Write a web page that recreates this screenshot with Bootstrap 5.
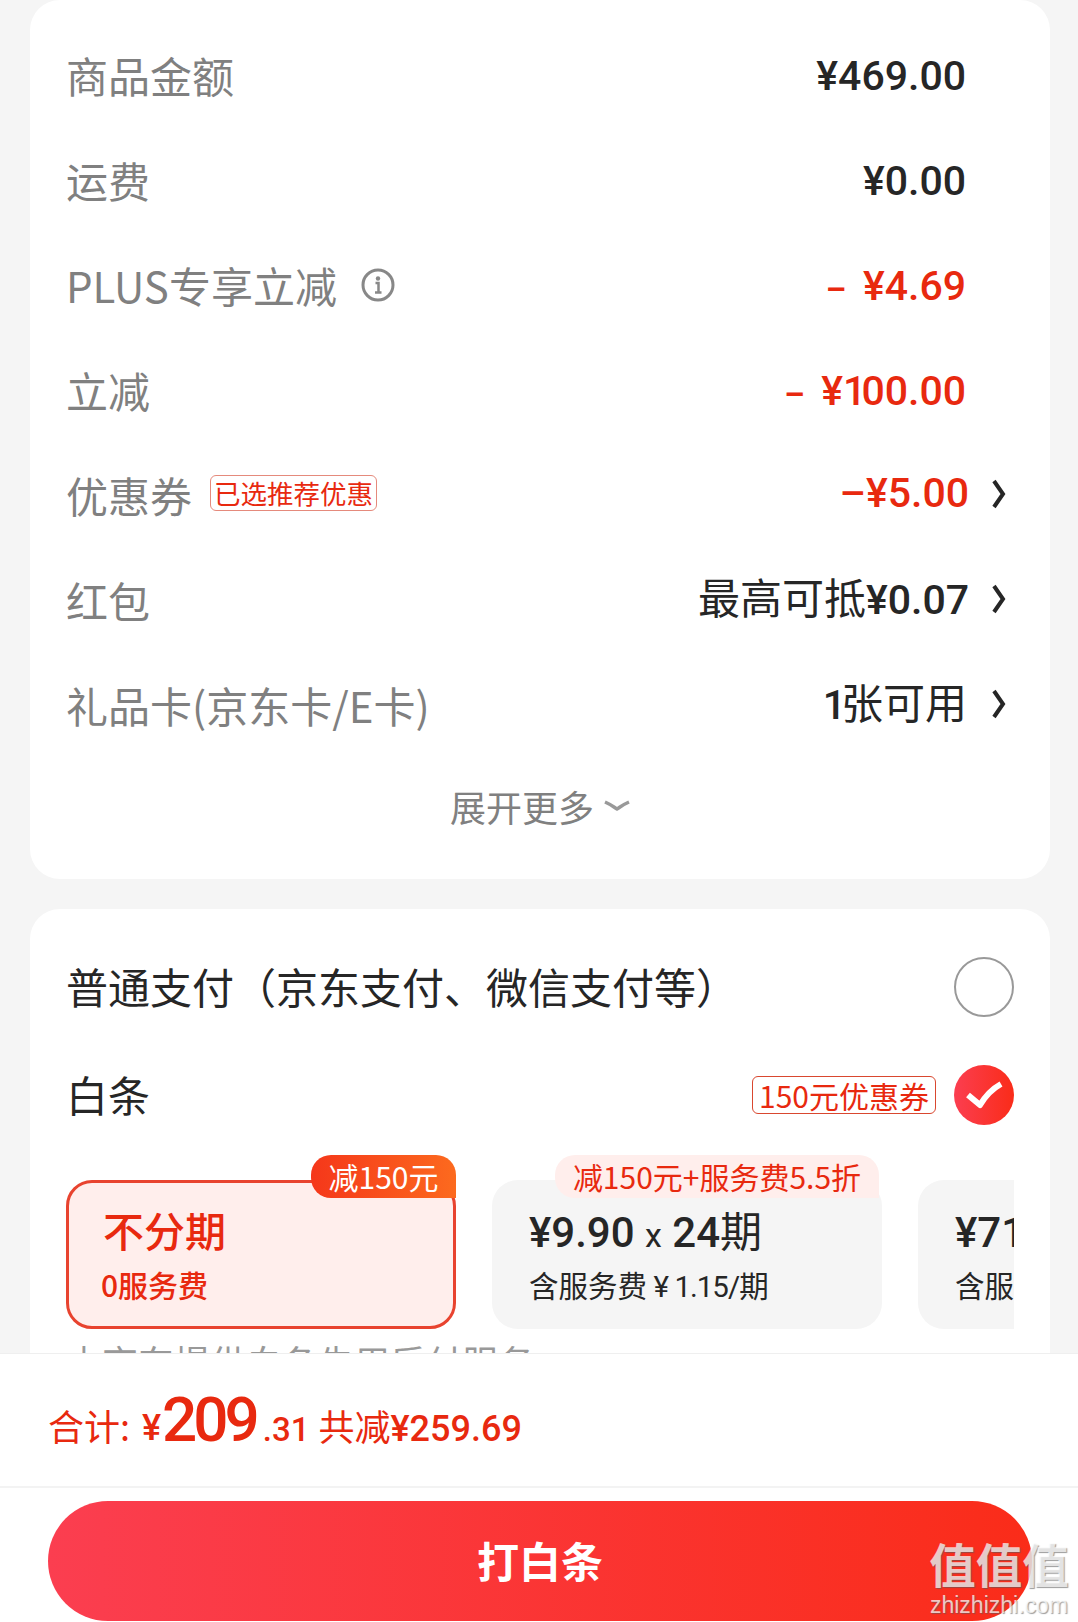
<!DOCTYPE html>
<html lang="zh-CN">
<head>
<meta charset="UTF-8">
<meta name="viewport" content="width=device-width, initial-scale=1.0">
<title>确认订单</title>
<link rel="stylesheet" href="https://cdn.jsdelivr.net/npm/bootstrap@5.3.0/dist/css/bootstrap.min.css">
<style>
html, body { height: 1622px; overflow: hidden; }
body {
    background: #f5f5f5;
    font-family: "Roboto", "Noto Sans CJK SC", sans-serif;
    color: #262626;
    position: relative;
}
.pay-scroll { height: 1353px; overflow: hidden; padding: 0 28px 0 30px; }
.sheet { background: #fff; border-radius: 30px; }
.sheet-fee { height: 879px; padding: 22px 44px 0 36px; }
.sheet-pay { margin-top: 30px; height: 600px; padding: 24px 36px 0 36px; }
.fee-row { height: 105px; font-size: 42px; line-height: 1; }
.fee-name { color: #808080; font-family: "Noto Sans CJK SC", sans-serif; }
.fee-val { font-size: 41px; font-weight: 500; padding-top: 3px; }
.fee-val .zh { font-family: "Noto Sans CJK SC", sans-serif; font-weight: 400; font-size: 42px; }
.fee-val.off { color: #e8290f; }
.fee-link { padding-top: 0; padding-bottom: 3px; }
.gap-dash { font-size: 32px; font-weight: 700; margin-right: 17px; }
.slim-one { letter-spacing: -6px; margin-right: 1px; }
.arrow-slot { width: 37px; display: flex; justify-content: flex-end; flex: none; padding-bottom: 2px; }
.arrow-none { width: 40px; }
.arrow-zh { width: 39px; }
.promo-tag {
    font-size: 26.500px; line-height: 34px; color: #e8290f; border: 1px solid #e58a7c;
    border-radius: 6px; padding: 0 3px; background: #fff; margin: -4px 0 0 2px;
    font-family: "Noto Sans CJK SC", sans-serif;
}
.more-link { color: #808080; font-size: 36px; height: 70px; margin-top: 14px; padding-left: 8px; gap: 10px; font-family: "Noto Sans CJK SC", sans-serif; }
.pay-row { height: 108px; }
.pay-name { font-size: 42px; color: #262626; padding-bottom: 4px; font-family: "Noto Sans CJK SC", sans-serif; }
.pick { width: 60px; height: 60px; border-radius: 50%; flex: none; }
.pick-off { border: 2px solid #999; }
.pick-on { background: linear-gradient(90deg, #fb3e50, #fa2c19); }
.ticket {
    font-size: 30px; line-height: 36px; color: #e8290f; border: 1px solid #d9472f;
    border-radius: 6px; padding: 0 6px; margin-right: 2px; font-family: "Noto Sans CJK SC", sans-serif;
}
.plan-strip { gap: 36px; overflow: hidden; padding-top: 25px; margin-top: 6px; width: 948px; }
.plan {
    width: 390px; height: 149px; flex: none; border-radius: 26px; background: #f5f5f5;
    position: relative; padding: 23px 37px 0;
}
.plan-on { background: #ffeeec; border: 3px solid #e8432f; padding: 20px 32px 0; }
.plan-title { font-size: 42px; line-height: 52px; font-weight: 500; white-space: nowrap; }
.plan-title .zh { font-family: "Noto Sans CJK SC", sans-serif; font-weight: 400; }
.plan-title .times { font-weight: 400; font-size: 34px; }
.plan-sub { font-size: 29.500px; line-height: 44px; white-space: nowrap; font-family: "Noto Sans CJK SC", sans-serif; padding-top: 1px; }
.plan-sub .num { font-family: "Roboto", sans-serif; letter-spacing: -1px; }
.plan-on .plan-title { color: #e8290f; font-size: 41px; font-family: "Noto Sans CJK SC", sans-serif; font-weight: 500; padding-left: 2px; }
.plan-on .plan-sub { color: #e8290f; margin-top: 6px; font-size: 30px; font-weight: 500; }
.plan-flag {
    position: absolute; top: -25px; right: 0; height: 43px; line-height: 42px; font-size: 30px;
    white-space: nowrap; font-family: "Noto Sans CJK SC", sans-serif;
}
.flag-solid { top: -28px; right: -3px; width: 145px; text-align: center; color: #fff; background: linear-gradient(90deg, #f5371a, #fc6a1e); border-radius: 20px 20px 0 20px; }
.flag-soft { right: 3px; width: 324px; text-align: center; color: #e8290f; background: #ffeeec; border-radius: 20px 20px 0 20px; }
.fine-print { font-size: 36px; color: #999; margin-top: 11px; font-family: "Noto Sans CJK SC", sans-serif; line-height: 1.2; }
.pay-foot { background: #fff; height: 269px; border-top: 1px solid #efefef; }
.total-bar { height: 134px; color: #e8290f; border-bottom: 2px solid #f3f3f3; padding: 10px 48px 0; font-size: 36px; font-weight: 500; }
.total-bar .zh { font-family: "Noto Sans CJK SC", sans-serif; font-weight: 400; }
.total-num { padding-top: 7px; }
.total-cent { font-size: 33px; padding-top: 9px; }
.total-yen { margin-left: 3px; font-size: 36px; padding-top: 5px; }
.total-big { font-size: 62px; font-weight: 500; letter-spacing: -4px; line-height: 1; margin: -10px 7px 0 1px; }
.pay-btn {
    display: block; width: 984px; height: 120px; margin: 13px 0 0 48px; border: 0; border-radius: 60px; padding: 0 0 4px;
    background: linear-gradient(90deg, #fb3e50, #fa2c19); color: #fff; font-size: 42px; font-weight: 700;
    font-family: "Noto Sans CJK SC", sans-serif;
}
.stamp { position: absolute; right: 9px; bottom: 4px; width: 140px; text-align: center; color: rgba(255,255,255,.72); text-shadow: 1px 1px 1px rgba(90,90,90,.6); }
.stamp-logo { font-size: 46.500px; line-height: 54px; margin-bottom: 2px; font-weight: 700; font-family: "Noto Sans CJK SC", sans-serif; white-space: nowrap; }
.stamp-url { font-size: 23px; line-height: 26px; font-family: "Liberation Sans", sans-serif; white-space: nowrap; }
</style>
</head>
<body>

<div class="pay-scroll">
    <div class="sheet sheet-fee">
        <div class="fee-row d-flex align-items-center justify-content-between">
            <span class="fee-name">商品金额</span>
            <div class="d-flex align-items-center"><span class="fee-val">¥469.00</span><span class="arrow-slot arrow-none"></span></div>
        </div>
        <div class="fee-row d-flex align-items-center justify-content-between">
            <span class="fee-name">运费</span>
            <div class="d-flex align-items-center"><span class="fee-val">¥0.00</span><span class="arrow-slot arrow-none"></span></div>
        </div>
        <div class="fee-row d-flex align-items-center justify-content-between">
            <span class="fee-name d-flex align-items-center gap-4">PLUS专享立减
                <svg class="me-1" width="34" height="34" viewBox="0 0 34 34" fill="none"><circle cx="17" cy="17" r="15" stroke="#888" stroke-width="3"/><circle cx="17" cy="10.500" r="2.200" fill="#888"/><path d="M14.500 15h3v9M14 24.500h6.500" stroke="#888" stroke-width="2.500"/></svg>
            </span>
            <div class="d-flex align-items-center"><span class="fee-val off"><span class="gap-dash">–</span>¥4.69</span><span class="arrow-slot arrow-none"></span></div>
        </div>
        <div class="fee-row d-flex align-items-center justify-content-between">
            <span class="fee-name">立减</span>
            <div class="d-flex align-items-center"><span class="fee-val off"><span class="gap-dash">–</span>¥<span class="slim-one">1</span>00.00</span><span class="arrow-slot arrow-none"></span></div>
        </div>
        <div class="fee-row d-flex align-items-center justify-content-between">
            <span class="fee-name d-flex align-items-center gap-3">优惠券 <span class="promo-tag">已选推荐优惠</span></span>
            <div class="d-flex align-items-center"><span class="fee-val fee-link off">–¥5.00</span><span class="arrow-slot"><svg width="14" height="30" viewBox="0 0 14 30" fill="none"><path d="M2 2l9 13-9 13" stroke="#262626" stroke-width="4"/></svg></span></div>
        </div>
        <div class="fee-row d-flex align-items-center justify-content-between">
            <span class="fee-name">红包</span>
            <div class="d-flex align-items-center"><span class="fee-val fee-link"><span class="zh">最高可抵</span>¥0.07</span><span class="arrow-slot"><svg width="14" height="30" viewBox="0 0 14 30" fill="none"><path d="M2 2l9 13-9 13" stroke="#262626" stroke-width="4"/></svg></span></div>
        </div>
        <div class="fee-row d-flex align-items-center justify-content-between">
            <span class="fee-name">礼品卡(京东卡/E卡)</span>
            <div class="d-flex align-items-center"><span class="fee-val fee-link"><span class="slim-one">1</span><span class="zh">张可用</span></span><span class="arrow-slot arrow-zh"><svg width="14" height="30" viewBox="0 0 14 30" fill="none"><path d="M2 2l9 13-9 13" stroke="#262626" stroke-width="4"/></svg></span></div>
        </div>
        <div class="more-link d-flex align-items-center justify-content-center">展开更多
            <svg width="26" height="12" viewBox="0 0 26 12" fill="none"><path d="M1 2c7 3 10 6 12 7 2-1 5-4 12-7" stroke="#999" stroke-width="3.500"/></svg>
        </div>
    </div>

    <div class="sheet sheet-pay">
        <div class="pay-row d-flex align-items-center justify-content-between">
            <span class="pay-name">普通支付（京东支付、微信支付等）</span>
            <span class="pick pick-off"></span>
        </div>
        <div class="pay-row d-flex align-items-center justify-content-between">
            <span class="pay-name">白条</span>
            <div class="d-flex align-items-center gap-3">
                <span class="ticket">150元优惠券</span>
                <span class="pick pick-on d-flex align-items-center justify-content-center">
                    <svg width="38" height="28" viewBox="0 0 38 28" fill="none"><path d="M3 14l12 10C21 14 27 8 36 3" stroke="#fff" stroke-width="6" stroke-linejoin="round"/></svg>
                </span>
            </div>
        </div>
        <div class="plan-strip d-flex">
            <div class="plan plan-on">
                <span class="plan-flag flag-solid">减150元</span>
                <div class="plan-title">不分期</div>
                <div class="plan-sub">0服务费</div>
            </div>
            <div class="plan">
                <span class="plan-flag flag-soft">减150元+服务费5.5折</span>
                <div class="plan-title">¥9.90 <span class="times">x</span> 24<span class="zh">期</span></div>
                <div class="plan-sub">含服务费 <span class="num">¥ 1.15/</span>期</div>
            </div>
            <div class="plan">
                <div class="plan-title">¥71.90 <span class="times">x</span> 3<span class="zh">期</span></div>
                <div class="plan-sub">含服务费 <span class="num">¥ 0.00/</span>期</div>
            </div>
        </div>
        <div class="fine-print">由京东提供白条先用后付服务</div>
    </div>
</div>

<div class="pay-foot">
    <div class="total-bar d-flex align-items-center">
        <span class="zh">合计:</span>&nbsp;<span class="total-yen">¥</span><span class="total-big">209</span><span class="total-cent">.31</span>&nbsp;<span class="zh">共减</span><span class="total-num">¥259.69</span>
    </div>
    <button type="button" class="btn pay-btn">打白条</button>
</div>

<div class="stamp">
    <div class="stamp-logo">值值值</div>
    <div class="stamp-url">zhizhizhi.com</div>
</div>

<script src="https://cdn.jsdelivr.net/npm/bootstrap@5.3.0/dist/js/bootstrap.bundle.min.js"></script>
</body>
</html>
